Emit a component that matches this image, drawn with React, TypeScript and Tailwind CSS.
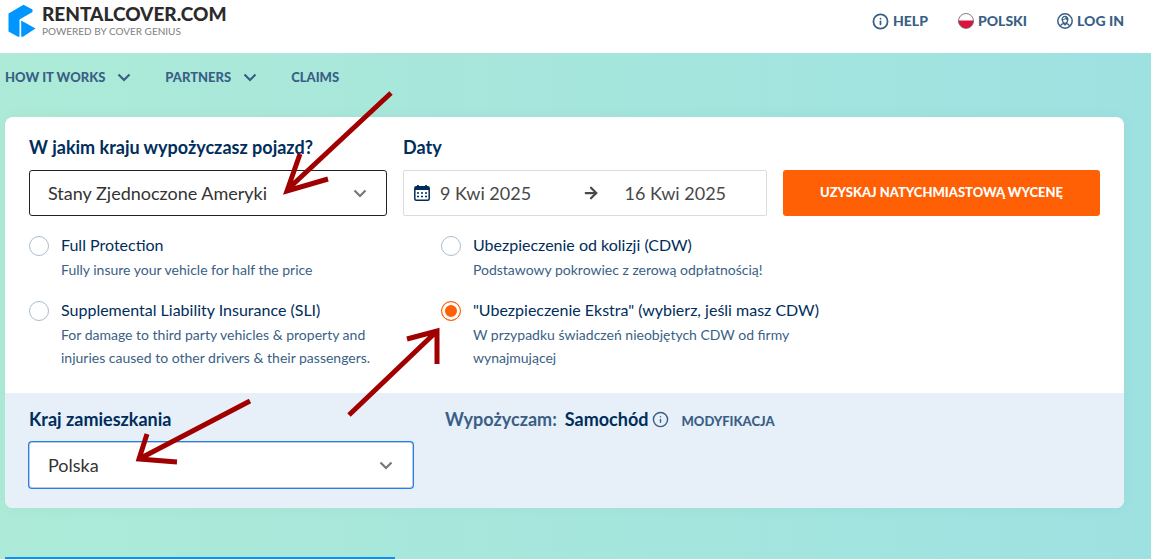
import React, { useState } from "react";
import { ArrowRight, Info } from "lucide-react";

const OPTIONS = [
  {
    id: "full",
    title: "Full Protection",
    desc: "Fully insure your vehicle for half the price",
  },
  {
    id: "cdw",
    title: "Ubezpieczenie od kolizji (CDW)",
    desc: "Podstawowy pokrowiec z zerową odpłatnością!",
  },
  {
    id: "sli",
    title: "Supplemental Liability Insurance (SLI)",
    desc: "For damage to third party vehicles & property and injuries caused to other drivers & their passengers.",
  },
  {
    id: "extra",
    title: '"Ubezpieczenie Ekstra" (wybierz, jeśli masz CDW)',
    desc: "W przypadku świadczeń nieobjętych CDW od firmy wynajmującej",
  },
];

function LogoMark() {
  return (
    <svg width="28" height="34" viewBox="0 0 28 34" fill="#0095ff" aria-hidden="true">
      <path d="M15.5 0.8 L24.5 5.5 V8 L11.5 15.5 V32.8 H10 L0.5 27.5 V9.5 Z" />
      <path d="M13.2 16.5 L27.5 24.5 L15 32.8 H13.2 Z" />
    </svg>
  );
}

function Chevron({ className }: { className?: string }) {
  return (
    <svg
      width="14"
      height="14"
      viewBox="0 0 14 14"
      fill="none"
      stroke="currentColor"
      strokeWidth="2.2"
      className={className}
      aria-hidden="true"
    >
      <path d="M1.5 4.5 L7 10 L12.5 4.5" />
    </svg>
  );
}

function FlagPoland() {
  return (
    <svg width="16" height="16" viewBox="0 0 16 16" aria-hidden="true">
      <circle cx="8" cy="8" r="7.5" fill="#fff" />
      <path d="M0.3 7.5 H15.7 A7.7 7.7 0 0 1 0.3 7.5 Z" fill="#dc143c" />
      <circle cx="8" cy="8" r="7.5" fill="none" stroke="#6b5a60" strokeWidth="0.8" />
    </svg>
  );
}

function UserIcon() {
  return (
    <svg width="16" height="16" viewBox="0 0 16 16" fill="none" stroke="currentColor" aria-hidden="true">
      <circle cx="8" cy="8" r="7.2" strokeWidth="1.5" />
      <path
        d="M5 7.5 C4.5 2 11.5 2 11 7.5 M5.4 6.5 C7 6.5 8.5 6 9 5 C9.3 6 10 6.5 10.7 6.6 M5.5 7 C5.5 11.5 10.5 11.5 10.5 7"
        strokeWidth="1.2"
      />
      <path d="M3.5 13 C4 11 5.5 10.8 6.5 10.5 L8 12 L9.5 10.5 C10.5 10.8 12 11 12.5 13" strokeWidth="1.2" />
    </svg>
  );
}

function CalendarIcon() {
  return (
    <svg width="16" height="16" viewBox="0 0 16 16" fill="none" stroke="#002d5b" aria-hidden="true">
      <rect x="0.8" y="1.8" width="14.4" height="13.4" rx="1.5" strokeWidth="1.5" />
      <path d="M1 3.5 H15" strokeWidth="3" />
      <path d="M4 0 V3 M12 0 V3" strokeWidth="1.8" />
      <path d="M3 8 H13 M3 11.5 H13" strokeWidth="1.6" strokeDasharray="2 2" />
    </svg>
  );
}

function CountrySelect({ id, value, focused }: { id: string; value: string; focused?: boolean }) {
  return (
    <div className="relative">
      <select
        id={id}
        defaultValue={value}
        className={`block h-[46px] w-full appearance-none rounded-[3px] border bg-white pl-[18px] pr-12 text-[18px] text-[#333] outline-none ${
          focused ? "border-[#c8c8c8] ring-1 ring-[#1a80ff]" : "border-[#222]"
        }`}
      >
        <option>{value}</option>
      </select>
      <Chevron className="pointer-events-none absolute right-5 top-4 text-[#777]" />
    </div>
  );
}

function Annotations() {
  return (
    <svg
      className="pointer-events-none absolute left-0 top-0"
      width="460"
      height="480"
      viewBox="0 0 460 480"
      fill="none"
      stroke="#a00000"
      strokeWidth="5"
      aria-hidden="true"
    >
      <path d="M391 93 L287 190 M300 154 L287 191 L328 179" />
      <path d="M349 415 L437 331 M407 339 L437 331 L437 364" />
      <path d="M250 401 L139 459 M147 434 L139 459 L177 462" />
    </svg>
  );
}

export default function App() {
  const [cover, setCover] = useState("extra");

  return (
    <div className="relative min-h-screen bg-linear-to-r from-[#adebd8] to-[#9ee1e1] font-['Lato',sans-serif]">
      <header className="flex h-[53px] items-start justify-between bg-white pl-2 pr-[27px]">
        <a href="#" className="flex gap-[6px] pt-1">
          <LogoMark />
          <div>
            <div className="text-[19px] font-black leading-5 text-[#2b2b2b]">RENTALCOVER.COM</div>
            <div className="text-[10px] leading-[14px] text-[#808080]">POWERED BY COVER GENIUS</div>
          </div>
        </a>
        <div className="flex gap-[30px] pt-[11px] text-[14px] font-black leading-5 text-[#3a5f86]">
          <a href="#" className="flex items-center gap-1">
            <Info size={17} strokeWidth={2.5} />
            HELP
          </a>
          <button className="flex items-center gap-1">
            <FlagPoland />
            POLSKI
          </button>
          <a href="#" className="flex items-center gap-1">
            <UserIcon />
            LOG IN
          </a>
        </div>
      </header>

      <nav className="flex h-16 items-start gap-[34px] pl-[5px] pt-[14px] text-[13px] font-black leading-5 text-[#3a5f86]">
        <button className="flex items-center gap-3">
          HOW IT WORKS
          <Chevron />
        </button>
        <button className="flex items-center gap-3">
          PARTNERS
          <Chevron />
        </button>
        <a href="#">CLAIMS</a>
      </nav>

      <form className="ml-[5px] mr-[27px] overflow-hidden rounded-lg bg-white shadow-[0_0_16px] shadow-black/4">
        <div className="px-6 pb-6 pt-[18px]">
          <div className="grid grid-cols-[358fr_364fr_317fr] items-end gap-4">
            <div>
              <label htmlFor="country" className="mb-[11px] block text-[18px] font-bold leading-6 text-[#002d5b]">
                W jakim kraju wypożyczasz pojazd?
              </label>
              <CountrySelect id="country" value="Stany Zjednoczone Ameryki" />
            </div>
            <div>
              <label htmlFor="from" className="mb-[11px] block text-[18px] font-bold leading-6 text-[#002d5b]">
                Daty
              </label>
              <div className="flex h-[46px] items-center rounded-[2px] border border-[#dcdcdc] px-[10px] text-[18px] text-[#484848]">
                <CalendarIcon />
                <input id="from" defaultValue="9 Kwi 2025" className="ml-[10px] w-0 flex-13 outline-none" />
                <ArrowRight size={18} strokeWidth={3} className="mr-6 text-[#484848]" />
                <input aria-label="Data zwrotu" defaultValue="16 Kwi 2025" className="w-0 flex-12 outline-none" />
              </div>
            </div>
            <button type="button" className="h-[46px] rounded-[3px] bg-[#ff6005] text-[13px] font-black text-white">
              UZYSKAJ NATYCHMIASTOWĄ WYCENĘ
            </button>
          </div>

          <div className="mt-4 grid grid-cols-[5fr_8fr] gap-y-4">
            {OPTIONS.map((option) => (
              <label key={option.id} className="flex items-start gap-3">
                <input
                  type="radio"
                  name="cover"
                  checked={cover === option.id}
                  onChange={() => setCover(option.id)}
                  className="mt-1 size-5 shrink-0 appearance-none rounded-full border border-[#a9bdcf] bg-white checked:border-[#ff6005] checked:bg-[#ff6005] checked:shadow-[inset_0_0_0_3px_white]"
                />
                <span className="block">
                  <span className="block text-[16px] leading-[26px] text-[#002d5b]">{option.title}</span>
                  <span className="block max-w-[330px] text-[14px] leading-[23px] text-[#3a5f86]">
                    {option.desc}
                  </span>
                </span>
              </label>
            ))}
          </div>
        </div>

        <div className="grid grid-cols-[384fr_655fr] gap-8 bg-[#e7f0f8] px-6 pb-5 pt-[14px]">
          <div>
            <label htmlFor="residence" className="mb-[11px] block text-[18px] font-bold leading-6 text-[#002d5b]">
              Kraj zamieszkania
            </label>
            <CountrySelect id="residence" value="Polska" focused />
          </div>
          <div className="flex items-baseline text-[18px] font-bold leading-6 text-[#3a5f86]">
            Wypożyczam:
            <span className="ml-2 text-[#002d5b]">Samochód</span>
            <Info size={17} strokeWidth={2} className="ml-1 self-start mt-1" />
            <button type="button" className="ml-3 text-[13px] font-black">
              MODYFIKACJA
            </button>
          </div>
        </div>
      </form>

      <div className="ml-[5px] mt-[49px] h-[2px] w-[390px] bg-[#0095ff]" />

      <Annotations />
    </div>
  );
}
